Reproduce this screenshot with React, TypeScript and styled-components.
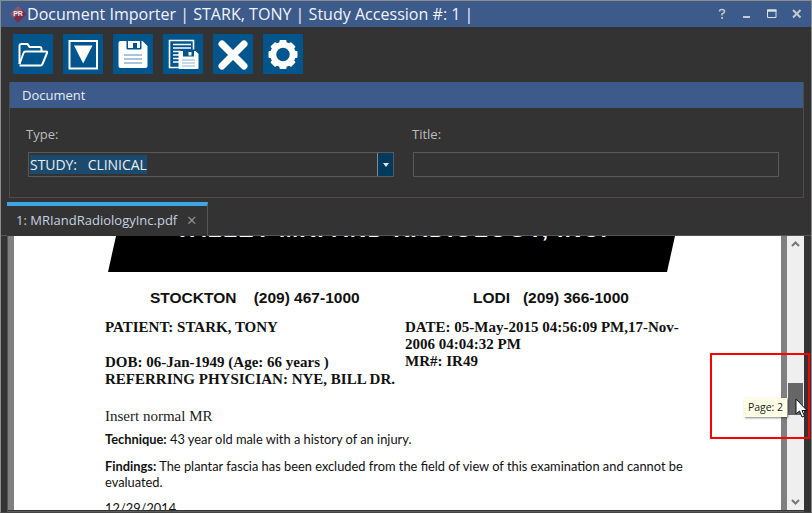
import React from "react";
import styled, { createGlobalStyle } from "styled-components";

const Global = createGlobalStyle`
  html, body { margin: 0; padding: 0; background: #333; }
  #root { width: 812px; height: 513px; }
`;

const Win = styled.div`
  position: relative;
  box-sizing: border-box;
  width: 812px;
  height: 513px;
  overflow: hidden;
  background: #333333;
  border: 1px solid #8c8c8c;
  border-bottom: 1px solid #444;
  display: flex;
  flex-direction: column;
  font-family: "Open Sans", sans-serif;
`;

const TitleBar = styled.div`
  height: 26px;
  flex: none;
  background: #3c5a8a;
  display: flex;
  align-items: center;
  padding: 0 6px 0 8px;
`;

const Logo = styled.svg`
  width: 18px;
  height: 18px;
  flex: none;
`;

const Title = styled.div`
  flex: 1;
  color: #f0f4fa;
  font-size: 16.06px;
  white-space: nowrap;
`;

const WinControls = styled.div`
  display: flex;
  align-items: center;
  gap: 9px;
`;

const WinBtn = styled.svg`
  width: 16px;
  height: 16px;
  display: block;
`;

const Toolbar = styled.div`
  display: flex;
  gap: 10px;
  padding: 7px 0 8px 12px;
  flex: none;
`;

const ToolBtn = styled.div`
  width: 40px;
  height: 40px;
  background: #00558c;
`;

const ToolIcon = styled.svg`
  width: 40px;
  height: 40px;
  display: block;
`;

const Panel = styled.div`
  margin: 0 7px 0 8px;
  border: 1px solid #524a4a;
  border-top: 0;
  height: 116px;
  flex: none;
  box-sizing: border-box;
`;

const PanelHead = styled.div`
  height: 26px;
  background: #3c5a8a;
  color: #e6ecf5;
  font-size: 13px;
  line-height: 26px;
  padding-left: 12px;
`;

const FieldRow = styled.div`
  display: flex;
  gap: 19px;
  padding: 17px 24px 0 18px;
`;

const Field = styled.div`
  width: 366px;
`;

const Label = styled.div<{ $x?: number }>`
  color: #bcbcbc;
  font-size: 13px;
  line-height: 18px;
  margin-left: ${(p) => p.$x ?? 0}px;
  margin-bottom: 9px;
`;

const Input = styled.div`
  box-sizing: border-box;
  height: 25px;
  border: 1px solid #595959;
  display: flex;
  align-items: center;
  padding-left: 1px;
`;

const Selected = styled.span`
  background: #1b4a6d;
  color: #e8eef4;
  font-size: 14px;
  line-height: 19px;
  white-space: pre;
  flex: none;
  letter-spacing: -0.05px;
`;

const Spacer = styled.div`
  flex: 1;
`;

const DropBtn = styled.div`
  width: 16px;
  height: 23px;
  background: #003a5c;
  border-left: 1px solid #888;
  box-sizing: border-box;
  display: flex;
  align-items: center;
  justify-content: center;
  &::after {
    content: "";
    border-left: 3.5px solid transparent;
    border-right: 3.5px solid transparent;
    border-top: 4px solid #e8e8e8;
  }
`;

const TabStrip = styled.div`
  height: 33px;
  margin-top: 4px;
  flex: none;
  display: flex;
  padding-left: 6px;
  border-bottom: 1px solid #555;
`;

const Tab = styled.div`
  box-sizing: border-box;
  width: 201px;
  height: 34px;
  border-top: 4px solid #3ea6e6;
  border-right: 1px solid #555;
  background: #333;
  display: flex;
  align-items: center;
  padding: 0 0 2px 9px;
  color: #c4d2e0;
  font-size: 13px;
  gap: 9px;
`;

const TabClose = styled.span`
  color: #8c8c8c;
  font-size: 13px;
  font-family: "DejaVu Sans", sans-serif;
`;

const Viewer = styled.div`
  flex: 1;
  min-height: 0;
  display: flex;
  margin: 0 7px 0 6px;
  padding-bottom: 1px;
  overflow: hidden;
  border-left: 1px solid #555;
  border-bottom: 1px solid #5c5c5c;
`;

const LeftStrip = styled.div`
  width: 6px;
  flex: none;
  background: #808080;
`;

const PageArea = styled.div`
  flex: 1;
  background: #fff;
  overflow: hidden;
  color: #000;
  min-width: 0;
  padding-left: 91px;
`;

const Banner = styled.div`
  width: 567px;
  height: 36px;
  margin-left: 3px;
  background: #000;
  clip-path: polygon(8px 0, 567px 0, 559px 36px, 0 36px);
  color: #fff;
  font: bold 23px "Liberation Sans", sans-serif;
  text-align: center;
  white-space: nowrap;
  letter-spacing: 1.3px;
  overflow: hidden;
  box-sizing: border-box;
`;

const BannerText = styled.div`
  margin-top: -17px;
  line-height: 20px;
`;

const Offices = styled.div`
  display: grid;
  grid-template-columns: 323px auto;
  margin: 17px 0 0 45px;
  font: bold 15.5px/18px "Liberation Sans", sans-serif;
  color: #111;
  white-space: pre;
`;

const Patient = styled.div`
  display: grid;
  grid-template-columns: 300px 282px;
  margin-top: 12px;
  font: bold 15px/17px "Liberation Serif", serif;
  color: #111;
`;

const Gap = styled.div`
  height: 18px;
`;

const Insert = styled.div`
  font: 15px/18px "Liberation Serif", serif;
  margin-top: 19px;
  color: #222;
`;

const Report = styled.p<{ $top: number }>`
  font: 12.85px/16px Lato, sans-serif;
  margin: ${(p) => p.$top}px 0 0 0;
  width: 600px;
  color: #111;
`;

const ScrollTrack = styled.div`
  width: 23px;
  flex: none;
  display: flex;
  flex-direction: column;
  align-items: center;
  background: #efefef;
  border-left: 6px solid #808080;
  box-sizing: border-box;
`;

const ArrowBox = styled.svg`
  width: 17px;
  height: 17px;
  flex: none;
  display: block;
`;

const ThumbSpace = styled.div<{ $h: number }>`
  height: ${(p) => p.$h}px;
  flex: none;
`;

const Thumb = styled.div`
  width: 15px;
  height: 32px;
  background: #666;
  flex: none;
`;

const RedBox = styled.div`
  position: absolute;
  left: 709px;
  top: 352px;
  width: 100px;
  height: 86px;
  box-sizing: border-box;
  border: 2px solid #fa0000;
  pointer-events: none;
`;

const Tip = styled.div`
  position: absolute;
  left: 743px;
  top: 397px;
  width: 43px;
  height: 19px;
  box-sizing: border-box;
  background: #ffffe6;
  color: #222;
  font: 10.5px/18px "Open Sans", sans-serif;
  text-align: center;
  box-shadow: 1px 1px 2px rgba(0, 0, 0, 0.5);
  white-space: nowrap;
`;

const Cursor = styled.svg`
  position: absolute;
  left: 794px;
  top: 397px;
  width: 14px;
  height: 20px;
`;

const w = "#fff";
const b = "#00558c";

function IconOpen() {
  return (
    <ToolIcon viewBox="0 0 40 40">
      <path d="M6.500 30V12q0-2 2-2h6l2 3h10q2 0 2 2v2" fill="none" stroke={w} strokeWidth="2" />
      <path d="M6.500 31.500h21q1.500 0 2-1.500l4.500-11q.5-1.500-1-1.500H12.500q-1.500 0-2 1.500L6.500 30" fill="none" stroke={w} strokeWidth="2" strokeLinejoin="round" />
    </ToolIcon>
  );
}
function IconDown() {
  return (
    <ToolIcon viewBox="0 0 40 40">
      <rect x="6.500" y="7" width="27.500" height="27.500" fill="none" stroke={w} strokeWidth="2" />
      <path d="M11 11.500h18.500L20.200 29.500z" fill={w} />
    </ToolIcon>
  );
}
function IconSave() {
  return (
    <ToolIcon viewBox="0 0 40 40">
      <path d="M7.500 7h22l5 5v20q0 2-2 2H7.500q-2 0-2-2V9q0-2 2-2z" fill={w} />
      <path d="M13.500 7h15v7.500q0 1-1 1h-13q-1 0-1-1z" fill={b} />
      <rect x="15" y="7" width="12" height="7" fill={w} />
      <rect x="20" y="9" width="4" height="5" fill={b} />
      <path d="M11 21h18M11 25h18M11 29h18" stroke="#8fb3cf" strokeWidth="1.500" />
    </ToolIcon>
  );
}
function IconDocSave() {
  return (
    <ToolIcon viewBox="0 0 40 40">
      <path d="M16 33.500H6.500V6.500h24v9" fill="none" stroke={w} strokeWidth="1.600" />
      <path d="M10 10.500h18M10 14h18M10 17.500h8M10 21h6M10 24.500h6M10 28h6" stroke={w} strokeWidth="1.600" />
      <path d="M16.500 17h16l3 3v14q0 1-1 1h-18q-1 0-1-1V18q0-1 1-1z" fill={w} />
      <rect x="20" y="17" width="11" height="5.500" fill={b} />
      <rect x="25.500" y="18" width="3" height="3.500" fill={w} />
      <path d="M19 26h13M19 29h13M19 32h13" stroke="#8fb3cf" strokeWidth="1.200" />
    </ToolIcon>
  );
}
function IconX() {
  return (
    <ToolIcon viewBox="0 0 40 40">
      <path d="M9 10l22 22M31 10L9 32" stroke={w} strokeWidth="7" strokeLinecap="round" />
    </ToolIcon>
  );
}
function IconGear() {
  const teeth = [0, 45, 90, 135, 180, 225, 270, 315];
  return (
    <ToolIcon viewBox="0 0 40 40">
      {teeth.map((a) => (
        <rect key={a} x="16.500" y="6" width="7" height="6" rx="1" fill={w} transform={`rotate(${a} 20 20.500)`} />
      ))}
      <circle cx="20" cy="20.500" r="9.750" fill="none" stroke={w} strokeWidth="6" />
    </ToolIcon>
  );
}

export default function App() {
  return (
    <Win>
      <Global />
      <TitleBar>
        <Logo viewBox="0 0 17 17">
          <path d="M8.500 0.500l8 8-8 8-8-8z" fill="#7c2b48" />
          <path d="M8.500 0.500l-8 8 4 4 8-8z" fill="#8a7c88" opacity=".55" />
          <text x="8.500" y="10.500" fontSize="6.500" fontWeight="700" fill="#f3e8ec" textAnchor="middle" fontFamily="Liberation Sans">PR</text>
        </Logo>
        <Title>Document Importer | STARK, TONY | Study Accession #: 1 |</Title>
        <WinControls>
          <WinBtn viewBox="0 0 16 16">
            <path d="M5.500 5.500q0-2 2.500-2t2.500 2q0 1.500-2.500 2.500v1.500" fill="none" stroke="#c4c9d2" strokeWidth="1.600" />
            <rect x="7.200" y="11" width="1.800" height="1.800" fill="#c4c9d2" />
          </WinBtn>
          <WinBtn viewBox="0 0 16 16">
            <rect x="4" y="10" width="7" height="2" fill="#c4c9d2" />
          </WinBtn>
          <WinBtn viewBox="0 0 16 16">
            <path d="M3.500 4h8.500v7.500H3.500z" fill="none" stroke="#dde0e5" strokeWidth="1" />
            <rect x="3" y="3.500" width="9.500" height="2.200" fill="#dde0e5" />
          </WinBtn>
          <WinBtn viewBox="0 0 16 16">
            <path d="M4 4l7.500 7.500M11.500 4L4 11.500" stroke="#c4c9d2" strokeWidth="2" />
          </WinBtn>
        </WinControls>
      </TitleBar>
      <Toolbar>
        <ToolBtn><IconOpen /></ToolBtn>
        <ToolBtn><IconDown /></ToolBtn>
        <ToolBtn><IconSave /></ToolBtn>
        <ToolBtn><IconDocSave /></ToolBtn>
        <ToolBtn><IconX /></ToolBtn>
        <ToolBtn><IconGear /></ToolBtn>
      </Toolbar>
      <Panel>
        <PanelHead>Document</PanelHead>
        <FieldRow>
          <Field>
            <Label $x={-2}>Type:</Label>
            <Input>
              <Selected>STUDY:   CLINICAL</Selected>
              <Spacer />
              <DropBtn />
            </Input>
          </Field>
          <Field>
            <Label $x={-1}>Title:</Label>
            <Input />
          </Field>
        </FieldRow>
      </Panel>
      <TabStrip>
        <Tab>
          <span>1: MRIandRadiologyInc.pdf</span>
          <TabClose>✕</TabClose>
        </Tab>
      </TabStrip>
      <Viewer>
        <LeftStrip />
        <PageArea>
          <Banner><BannerText>VALLEY MRI AND RADIOLOGY, INC.</BannerText></Banner>
          <Offices>
            <span>STOCKTON    (209) 467-1000</span>
            <span>LODI   (209) 366-1000</span>
          </Offices>
          <Patient>
            <div>
              PATIENT: STARK, TONY
              <Gap />
              DOB: 06-Jan-1949 (Age: 66 years )
              <br />
              REFERRING PHYSICIAN: NYE, BILL DR.
            </div>
            <div>
              DATE: 05-May-2015 04:56:09 PM,17-Nov-2006 04:04:32 PM
              <br />
              MR#: IR49
            </div>
          </Patient>
          <Insert>Insert normal MR</Insert>
          <Report $top={6}><b>Technique:</b> 43 year old male with a history of an injury.</Report>
          <Report $top={11}><b>Findings:</b> The plantar fascia has been excluded from the field of view of this examination and cannot be evaluated.</Report>
          <Report $top={10}>12/29/2014</Report>
        </PageArea>
        <ScrollTrack>
          <ArrowBox viewBox="0 0 17 17">
            <path d="M5 10l3.500-3.500L12 10" fill="none" stroke="#777" strokeWidth="2" />
          </ArrowBox>
          <ThumbSpace $h={130} />
          <Thumb />
          <Spacer />
          <ArrowBox viewBox="0 0 17 17">
            <path d="M5 7l3.500 3.500L12 7" fill="none" stroke="#777" strokeWidth="2" />
          </ArrowBox>
        </ScrollTrack>
      </Viewer>
      <RedBox />
      <Tip>Page: 2</Tip>
      <Cursor viewBox="0 0 14 20">
        <path d="M1 1v15l3.500-3 2.500 6 2.500-1-2.500-5.500H12z" fill="#fff" stroke="#111" strokeWidth="1" />
      </Cursor>
    </Win>
  );
}
